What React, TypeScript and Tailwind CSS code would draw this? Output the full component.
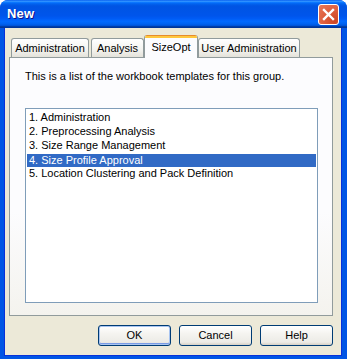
import React from "react"

const items = [
  "1. Administration",
  "2. Preprocessing Analysis",
  "3. Size Range Management",
  "4. Size Profile Approval",
  "5. Location Clustering and Pack Definition",
]

function Tab({ label, width, active, className = "" }: { label: string; width: string; active?: boolean; className?: string }) {
  if (active) {
    return (
      <div
        className={`relative z-10 -mb-px flex h-[23px] flex-col overflow-hidden rounded-t-[3px] border-x border-[#919b9c] bg-[#fcfcfe] ${width} ${className}`}
      >
        <div className="h-px bg-[#e68b2c]" />
        <div className="h-[2px] bg-[#ffc73c]" />
        <div className="flex flex-1 items-center justify-center pb-[2px]">{label}</div>
      </div>
    )
  }
  return (
    <div
      className={`flex h-[19px] items-center justify-center rounded-t-[3px] border border-b-0 border-[#919b9c] bg-[linear-gradient(to_bottom,#ffffff,#f3f3ef_60%,#e4e2da)] ${width} ${className}`}
    >
      {label}
    </div>
  )
}

function Button({ label, primary }: { label: string; primary?: boolean }) {
  return (
    <button
      className={`flex h-[21px] w-[73px] items-center justify-center rounded-[3px] border border-[#003c74] bg-[linear-gradient(to_bottom,#ffffff,#f5f4f0_40%,#ecebe6_85%,#d6d0c5)] ${
        primary ? "shadow-[inset_0_0_0_1px_#a9c5f1,inset_0_-1px_0_1px_#7a9ce6]" : ""
      }`}
    >
      {label}
    </button>
  )
}

export default function App() {
  return (
    <div className="h-[359px] w-[347px] bg-white font-['Liberation_Sans',Arial,sans-serif] text-[11px] text-black">
      <div className="flex h-full flex-col overflow-hidden rounded-t-[8px] bg-[#0055e5]">
        {/* Title bar */}
        <div className="flex h-[28px] shrink-0 items-center justify-between bg-[linear-gradient(to_bottom,#0058ee_0%,#3593ff_4%,#288eff_6%,#127dff_8%,#036ffc_10%,#0262ee_14%,#0057e5_20%,#0054e3_24%,#0055eb_56%,#005bf5_66%,#026afe_76%,#0062ef_86%,#0052d6_92%,#0040ab_94%,#003092_100%)] pl-[7px] pr-[8px]">
          <span className="text-[13px] font-bold tracking-[0.2px] text-white [text-shadow:1px_1px_0_#0f1089]">New</span>
          <div className="flex h-[21px] w-[21px] items-center justify-center rounded-[3px] border border-white bg-[radial-gradient(circle_at_85%_85%,#cc4625_0%,#dc5b3a_45%,#e87a5b_100%)]">
            <svg width="13" height="13" viewBox="0 0 13 13">
              <path d="M2 2 L11 11 M11 2 L2 11" stroke="white" strokeWidth="2.4" strokeLinecap="square" />
            </svg>
          </div>
        </div>

        {/* Body */}
        <div className="ml-[4px] mr-[5px] mb-[4px] flex flex-1 flex-col border-x border-b border-[#0831d9] bg-[#ece9d8] pt-[7px] pb-[9px] pl-[4px] pr-[8px]">
          <div className="flex h-[22px] items-end pl-[2px]">
            <Tab label="Administration" width="w-[78px]" />
            <Tab label="Analysis" width="w-[53px]" className="ml-[2px]" />
            <Tab label="SizeOpt" width="w-[54px]" active />
            <Tab label="User Administration" width="w-[102px]" />
          </div>

          <div className="flex h-[259px] flex-col border border-[#919b9c] bg-[linear-gradient(to_bottom,#fcfcfe_0%,#fcfcfe_60%,#f4f3ee_100%)] pl-[15px] pr-[14px] pb-[12px] pt-[12px]">
            <p className="leading-[13px]">This is a list of the workbook templates for this group.</p>
            <div className="mt-[25px] flex flex-1 flex-col border border-[#7f9db9] bg-white p-px">
              {items.map((t, i) => (
                <div
                  key={t}
                  className={`pl-[2px] ${i < 3 ? "h-[14px] leading-[14px]" : "h-[13px] leading-[13px]"} ${
                    i === 3 ? "mt-[2px] bg-[#316ac5] text-white" : ""
                  }`}
                >
                  {t}
                </div>
              ))}
            </div>
          </div>

          <div className="mt-[9px] flex justify-end gap-[8px]">
            <Button label="OK" primary />
            <Button label="Cancel" />
            <Button label="Help" />
          </div>
        </div>
      </div>
    </div>
  )
}
